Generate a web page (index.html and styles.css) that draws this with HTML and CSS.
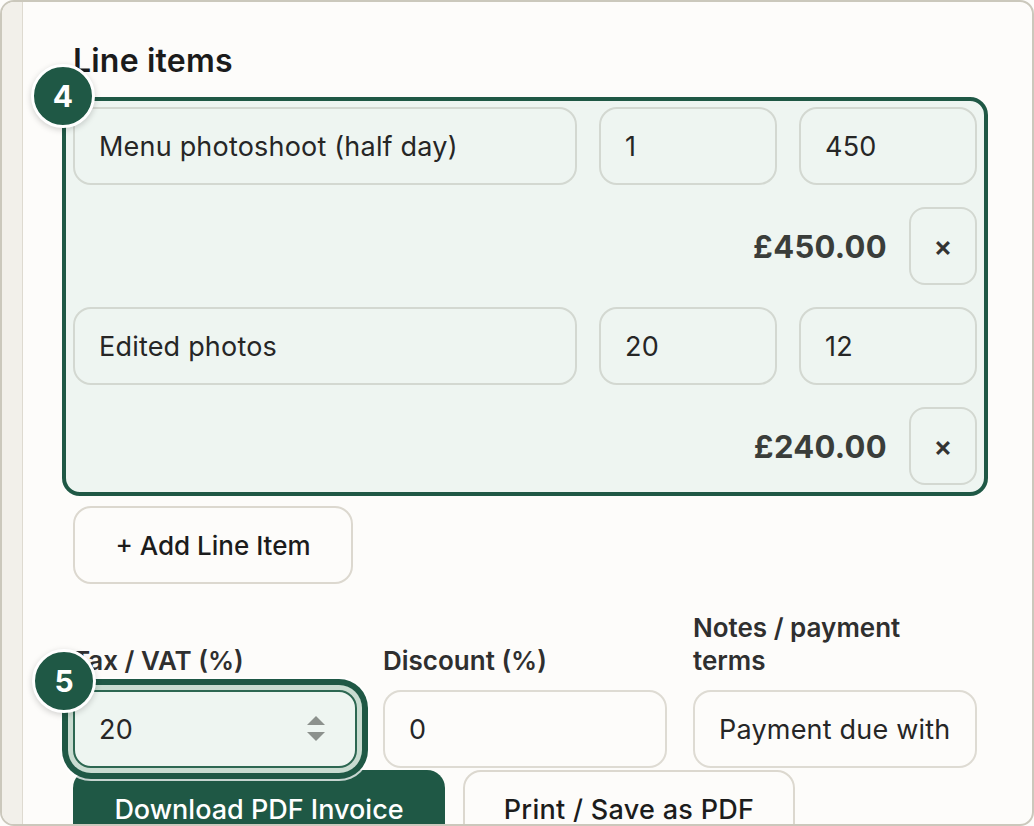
FILE: index.html
```html
<!DOCTYPE html>
<html lang="en">
<head>
<meta charset="utf-8">
<title>Invoice – Line items</title>
<link rel="stylesheet" href="styles.css">
</head>
<body>
<div class="frame">
  <aside class="rail"></aside>
  <main class="main">
    <h2 class="title">Line items</h2>
    <div class="spot-items">
      <span class="badge badge-items">4</span>
      <div class="items">
        <div class="item">
          <input class="field" type="text" value="Menu photoshoot (half day)">
          <input class="field" type="text" value="1">
          <input class="field" type="text" value="450">
          <div class="item-foot">
            <span class="total">£450.00</span>
            <button class="remove" type="button">×</button>
          </div>
        </div>
        <div class="item">
          <input class="field" type="text" value="Edited photos">
          <input class="field" type="text" value="20">
          <input class="field" type="text" value="12">
          <div class="item-foot">
            <span class="total">£240.00</span>
            <button class="remove" type="button">×</button>
          </div>
        </div>
      </div>
    </div>
    <button class="btn btn-add" type="button">+ Add Line Item</button>
    <div class="settings">
      <div class="group">
        <span class="label">Tax / VAT (%)</span>
        <div class="tax-wrap">
          <span class="badge badge-tax">5</span>
          <div class="field field-tax">
            <span class="tax-value">20</span>
            <svg class="spin" width="18" height="28" viewBox="0 0 18 28" aria-hidden="true">
              <path d="M9 1 L18 10 L0 10 Z" fill="#8c918d"/>
              <path d="M0 17 L18 17 L9 26 Z" fill="#8c918d"/>
            </svg>
          </div>
        </div>
      </div>
      <div class="group">
        <span class="label">Discount (%)</span>
        <input class="field field-plain" type="text" value="0">
      </div>
      <div class="group">
        <span class="label">Notes / payment terms</span>
        <input class="field field-plain" type="text" value="Payment due within 14 days">
      </div>
    </div>
    <div class="actions">
      <button class="btn btn-primary" type="button">Download PDF Invoice</button>
      <button class="btn btn-print" type="button">Print / Save as PDF</button>
    </div>
  </main>
</div>
</body>
</html>
```

FILE: styles.css
```css
* { box-sizing: border-box; }

html, body {
  margin: 0;
  padding: 0;
  background: #fdfcfa;
}

body {
  font-family: Inter, "Liberation Sans", sans-serif;
  color: #262626;
}

.frame {
  width: 1034px;
  height: 826px;
  border: 2px solid #cbc8bc;
  border-radius: 14px;
  overflow: hidden;
  display: flex;
  background: #fdfcfa;
}

.rail {
  width: 21px;
  flex: 0 0 21px;
  background: #f2f0ea;
  border-right: 1px solid #dedad0;
}

.main {
  flex: 1;
  padding: 41px 55px 0 50px;
  display: flex;
  flex-direction: column;
  align-items: flex-start;
}

.main > * {
  flex-shrink: 0;
}

.title {
  margin: 0;
  font-size: 32px;
  line-height: 36px;
  font-weight: 600;
  color: #1b1b1b;
  letter-spacing: 0.2px;
}

.spot-items {
  position: relative;
  align-self: stretch;
  margin: 18px -11px 0;
  border: 4px solid #1f5845;
  border-radius: 18px;
  background: #eef5f1;
  padding: 6px 7px 7px;
}

.badge {
  position: absolute;
  width: 64px;
  height: 64px;
  border-radius: 50%;
  background: #1f5845;
  border: 3px solid #ffffff;
  color: #ffffff;
  font-size: 30px;
  font-weight: 700;
  display: flex;
  align-items: center;
  justify-content: center;
  box-shadow: 0 2px 6px rgba(0, 0, 0, 0.18);
  z-index: 5;
}

.badge-items {
  left: -35px;
  top: -37px;
}

.items {
  display: flex;
  flex-direction: column;
  gap: 22px;
}

.item {
  display: grid;
  grid-template-columns: 504px 178px 178px;
  gap: 22px;
}

.field {
  height: 78px;
  width: 100%;
  border: 2px solid #d3d8d1;
  border-radius: 18px;
  background: #eef5f1;
  padding: 0 24px;
  font-family: inherit;
  font-size: 27px;
  letter-spacing: 0.2px;
  color: #262626;
  outline: none;
}

.item-foot {
  grid-column: 1 / -1;
  display: flex;
  justify-content: flex-end;
  align-items: center;
  gap: 22px;
}

.total {
  font-size: 31px;
  font-weight: 700;
  letter-spacing: 0.3px;
  color: #3a3d3a;
}

.remove {
  width: 68px;
  height: 78px;
  border: 2px solid #d3d8d1;
  border-radius: 16px;
  background: #eef5f1;
  font-family: inherit;
  font-size: 28px;
  font-weight: 600;
  color: #333333;
  padding: 0;
}

.btn {
  height: 78px;
  border-radius: 18px;
  font-family: inherit;
  font-size: 27px;
  font-weight: 500;
  padding: 0;
}

.btn-add {
  margin-top: 10px;
  width: 280px;
  border: 2px solid #dcd8cf;
  background: #fdfcfa;
  color: #1c1c1c;
  font-size: 26px;
}

.settings {
  margin-top: 27px;
  align-self: stretch;
  display: grid;
  grid-template-columns: 284px 284px 284px;
  gap: 26px;
  align-items: end;
}

.group {
  display: flex;
  flex-direction: column;
}

.label {
  font-size: 26px;
  line-height: 33px;
  font-weight: 600;
  color: #2f2f2f;
  margin-bottom: 13px;
}

.tax-wrap {
  position: relative;
  z-index: 3;
}

.badge-tax {
  left: -41px;
  top: -41px;
}

.field-tax {
  display: flex;
  align-items: center;
  justify-content: space-between;
  border-color: #2d6752;
  padding-right: 30px;
  box-shadow:
    0 0 0 5px #c9dcd1,
    0 0 0 11px #1f5845,
    0 0 0 13px rgba(255, 255, 255, 0.75);
}

.tax-value {
  line-height: 1;
}

.spin {
  display: block;
}

.field-plain {
  border-color: #dedbd3;
  background: #fdfcfa;
}

.actions {
  margin-top: 2px;
  display: flex;
  gap: 18px;
}

.btn-primary {
  width: 372px;
  border: none;
  background: #1f5845;
  color: #ffffff;
}

.btn-print {
  width: 332px;
  border: 2px solid #dcd8cf;
  background: #fdfcfa;
  color: #1c1c1c;
  letter-spacing: 0.3px;
}
```
